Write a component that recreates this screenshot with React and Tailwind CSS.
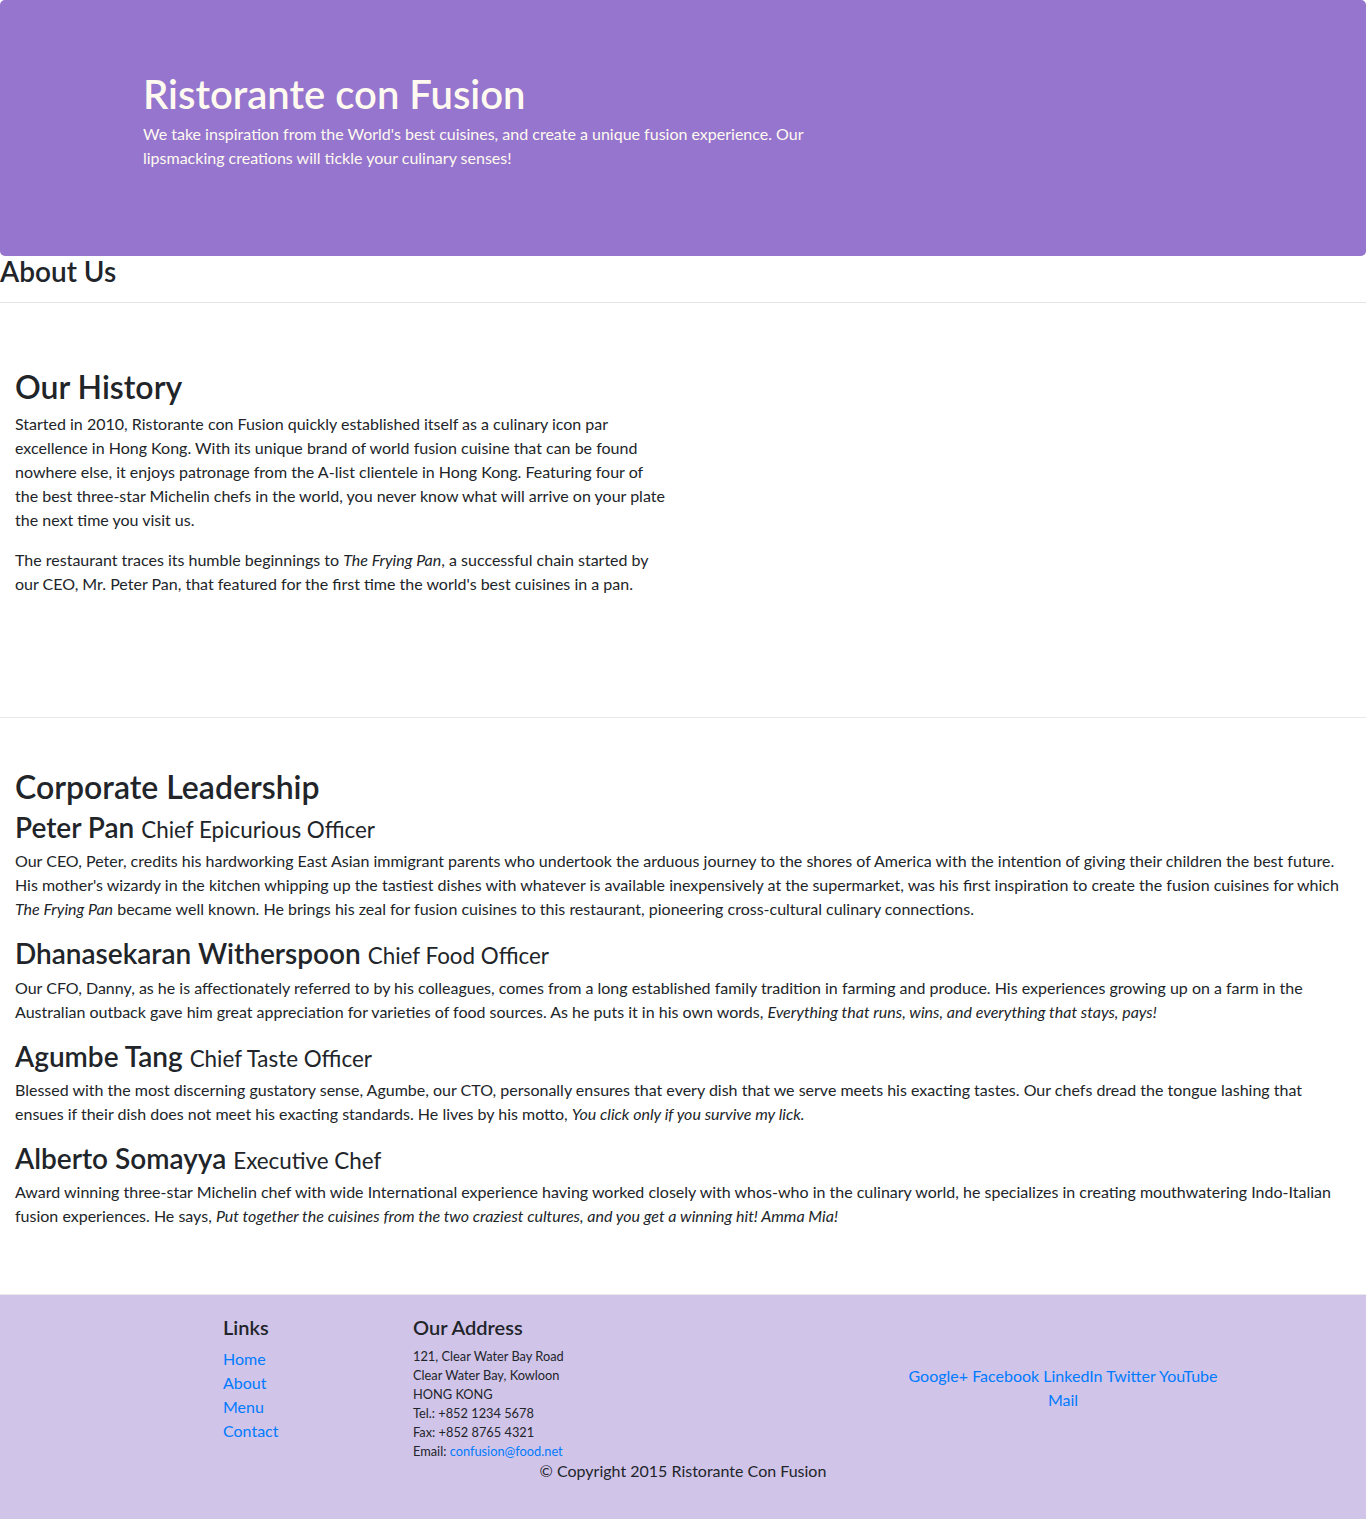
const leaders = [
  {
    name: 'Peter Pan',
    designation: 'Chief Epicurious Officer',
    description: (
      <>
        Our CEO, Peter, credits his hardworking East Asian immigrant parents who undertook the arduous journey to the
        shores of America with the intention of giving their children the best future. His mother's wizardy in the
        kitchen whipping up the tastiest dishes with whatever is available inexpensively at the supermarket, was his
        first inspiration to create the fusion cuisines for which <em>The Frying Pan</em> became well known. He brings
        his zeal for fusion cuisines to this restaurant, pioneering cross-cultural culinary connections.
      </>
    ),
  },
  {
    name: 'Dhanasekaran Witherspoon',
    designation: 'Chief Food Officer',
    description: (
      <>
        Our CFO, Danny, as he is affectionately referred to by his colleagues, comes from a long established family
        tradition in farming and produce. His experiences growing up on a farm in the Australian outback gave him great
        appreciation for varieties of food sources. As he puts it in his own words,{' '}
        <em>Everything that runs, wins, and everything that stays, pays!</em>
      </>
    ),
  },
  {
    name: 'Agumbe Tang',
    designation: 'Chief Taste Officer',
    description: (
      <>
        Blessed with the most discerning gustatory sense, Agumbe, our CTO, personally ensures that every dish that we
        serve meets his exacting tastes. Our chefs dread the tongue lashing that ensues if their dish does not meet his
        exacting standards. He lives by his motto, <em>You click only if you survive my lick.</em>
      </>
    ),
  },
  {
    name: 'Alberto Somayya',
    designation: 'Executive Chef',
    description: (
      <>
        Award winning three-star Michelin chef with wide International experience having worked closely with whos-who
        in the culinary world, he specializes in creating mouthwatering Indo-Italian fusion experiences. He says,{' '}
        <em>Put together the cuisines from the two craziest cultures, and you get a winning hit! Amma Mia!</em>
      </>
    ),
  },
];

/**
 * Jumbotron header with restaurant name and tagline
 */
function Header() {
  return (
    <header className="bg-[#9575CD] text-[#FFFAF0] rounded-[5px] pt-[66px] pb-[70px]">
      <div className="mx-auto max-w-[1140px] px-[15px]">
        <div className="flex">
          <div className="w-[760px] px-[15px]">
            <h1 className="text-[40px] leading-[1.2] font-semibold mt-1 mb-1">Ristorante con Fusion</h1>
            <p className="mb-4">
              We take inspiration from the World's best cuisines, and create a unique fusion experience. Our
              lipsmacking creations will tickle your culinary senses!
            </p>
          </div>
        </div>
      </div>
    </header>
  );
}

function Leader({ leader }) {
  return (
    <div>
      <h3 className="text-[28px] leading-[1.2] font-semibold mb-[4.5px]">
        {leader.name}{' '}
        <small className="text-[22.4px] font-normal">{leader.designation}</small>
      </h3>
      <p className="mb-4">{leader.description}</p>
    </div>
  );
}

function Footer() {
  return (
    <footer className="bg-[#D1C4E9] py-5">
      <div className="mx-auto max-w-[1140px] px-[15px]">
        <div className="flex -mx-[15px]">
          {/* Links */}
          <div className="ml-[95px] w-[190px] px-[15px]">
            <h5 className="text-[20px] leading-6 font-semibold mb-2">Links</h5>
            <ul className="mb-4">
              {['Home', 'About', 'Menu', 'Contact'].map((link) => (
                <li key={link}>
                  <a href="#" className="text-[#007bff]">
                    {link}
                  </a>
                </li>
              ))}
            </ul>
          </div>

          {/* Address */}
          <div className="w-[475px] px-[15px]">
            <h5 className="text-[20px] leading-6 font-semibold mb-2">Our Address</h5>
            <address className="not-italic text-[12.8px] leading-[19px] mb-0">
              121, Clear Water Bay Road
              <br />
              Clear Water Bay, Kowloon
              <br />
              HONG KONG
              <br />
              Tel.: +852 1234 5678
              <br />
              Fax: +852 8765 4321
              <br />
              Email:{' '}
              <a href="mailto:confusion@food.net" className="text-[#007bff]">
                confusion@food.net
              </a>
            </address>
          </div>

          {/* Social */}
          <div className="w-[380px] px-[15px] self-center">
            <div className="w-[320px] mx-auto text-center">
              <a href="#" className="text-[#007bff]">Google+</a>{' '}
              <a href="#" className="text-[#007bff]">Facebook</a>{' '}
              <a href="#" className="text-[#007bff]">LinkedIn</a>{' '}
              <a href="#" className="text-[#007bff]">Twitter</a>{' '}
              <a href="#" className="text-[#007bff]">YouTube</a>{' '}
              <a href="#" className="text-[#007bff]">Mail</a>
            </div>
          </div>
        </div>

        <div className="flex justify-center -mt-[2px]">
          <p className="mb-4">© Copyright 2015 Ristorante Con Fusion</p>
        </div>
      </div>
    </footer>
  );
}

export default function App() {
  return (
    <div className="font-['Segoe_UI','Lato','Noto_Sans',sans-serif] text-[#212529] text-base leading-6 bg-white">
      <Header />

      {/* Page title */}
      <div>
        <h3 className="text-[28px] leading-[30px] font-semibold mb-4">About Us</h3>
        <hr className="border-0 border-t border-[rgba(0,0,0,0.1)] mb-[15px]" />
      </div>

      {/* History */}
      <section className="min-h-[400px] py-[50px] border-b border-[#e8e8e8] px-[15px]">
        <div className="w-[653px]">
          <h2 className="text-[32px] leading-[1.2] font-semibold mb-[6px]">Our History</h2>
          <p className="mb-4">
            Started in 2010, Ristorante con Fusion quickly established itself as a culinary icon par excellence in Hong
            Kong. With its unique brand of world fusion cuisine that can be found nowhere else, it enjoys patronage from
            the A-list clientele in Hong Kong. Featuring four of the best three-star Michelin chefs in the world, you
            never know what will arrive on your plate the next time you visit us.
          </p>
          <p className="mb-4">
            The restaurant traces its humble beginnings to <em>The Frying Pan</em>, a successful chain started by our
            CEO, Mr. Peter Pan, that featured for the first time the world's best cuisines in a pan.
          </p>
        </div>
      </section>

      {/* Leadership */}
      <section className="py-[50px] border-b border-[#e8e8e8] px-[15px]">
        <h2 className="text-[32px] leading-[1.2] font-semibold mb-[5px]">Corporate Leadership</h2>
        {leaders.map((leader) => (
          <Leader key={leader.name} leader={leader} />
        ))}
      </section>

      <Footer />
    </div>
  );
}
